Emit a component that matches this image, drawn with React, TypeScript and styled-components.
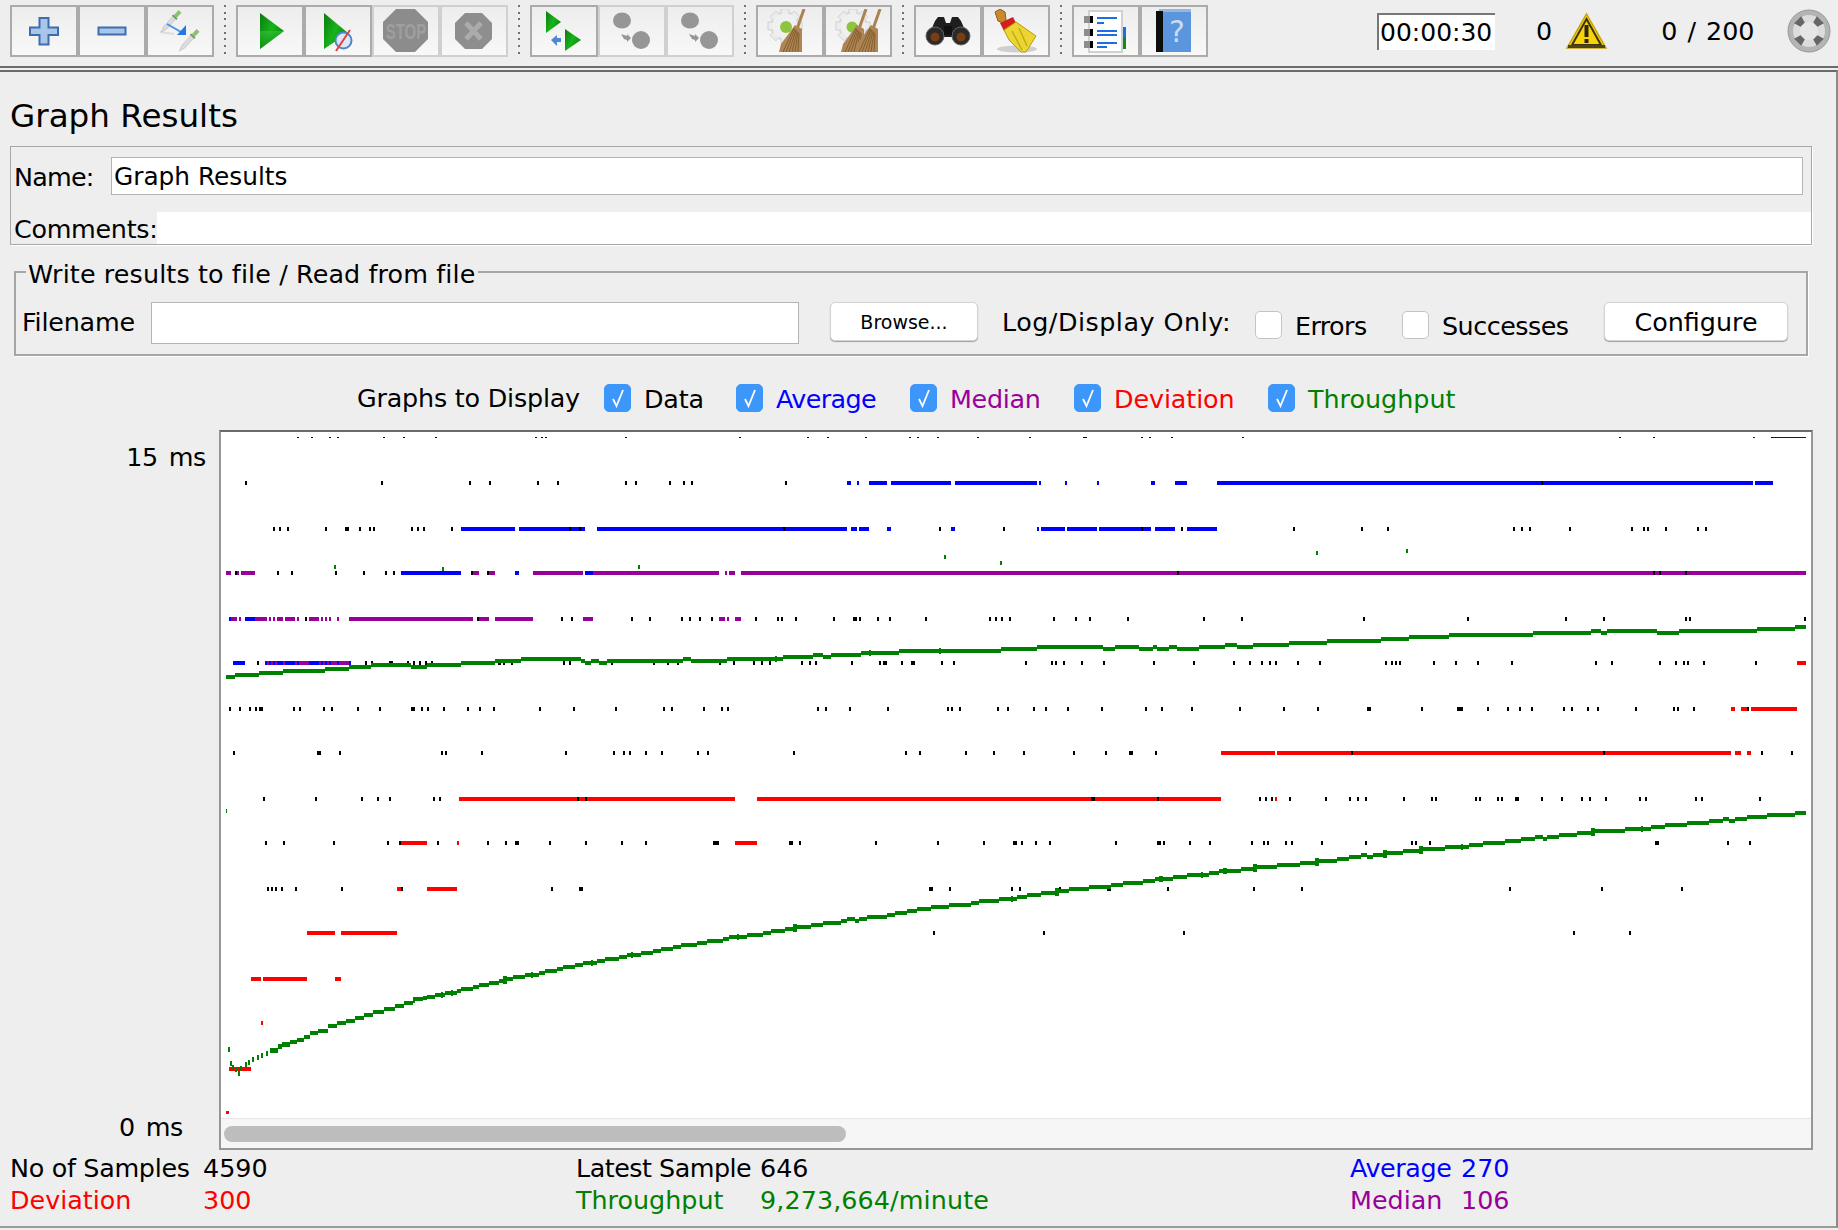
import styled, { createGlobalStyle } from "styled-components";

const GlobalStyle = createGlobalStyle`
  html, body {
    margin: 0;
    padding: 0;
    background: #eeeeee;
  }
  * {
    box-sizing: border-box;
  }
`;

const Page = styled.div`
  width: 1838px;
  height: 1230px;
  overflow: hidden;
  background: #eeeeee;
  color: #000;
  font-family: "DejaVu Sans", "Liberation Sans", sans-serif;
  font-size: 25.4px;
`;

const Toolbar = styled.div`
  display: flex;
  align-items: center;
  height: 68px;
  padding: 0 0 4px 10px;
  border-bottom: 2px solid #6b6b6b;
  margin-bottom: 2px;
`;

const ToolGroup = styled.div`
  display: flex;
`;

const ToolButton = styled.div<{ $off?: boolean }>`
  width: 68px;
  height: 52px;
  display: flex;
  align-items: center;
  justify-content: center;
  border: 2px solid ${(p) => (p.$off ? "#d0d0d0" : "#ababab")};
  background: linear-gradient(#ededed, #f8f8f8);
`;

const Dots = styled.div`
  width: 2px;
  height: 52px;
  margin: 0 10px;
  background: repeating-linear-gradient(#707070 0 2px, transparent 2px 6.7px);
`;

const Timer = styled.div`
  width: 118px;
  height: 37px;
  margin-left: 169px;
  border-top: 2px solid #777;
  border-left: 2px solid #777;
  background: #fff;
  padding-left: 1px;
  line-height: 35px;
  font-size: 25px;
  white-space: nowrap;
`;

const ToolText = styled.div<{ $left: number }>`
  margin-left: ${(p) => p.$left}px;
  font-size: 25.4px;
  word-spacing: 2px;
  white-space: nowrap;
`;

const IconSlot = styled.div<{ $left: number }>`
  margin-left: ${(p) => p.$left}px;
  display: flex;
`;

const Content = styled.div`
  height: 1158px;
  padding-left: 10px;
  border-top: 2px solid #6b6b6b;
  border-right: 2px solid #8a8a8a;
  border-bottom: 2px solid #9a9a9a;
`;

const Title = styled.h1`
  margin: 0;
  height: 74px;
  padding-top: 24px;
  font-size: 32.6px;
  line-height: 40px;
  font-weight: 400;
`;

const NamePanel = styled.div`
  width: 1802px;
  height: 99px;
  border: 1px solid #a8a8a8;
  box-shadow: 1px 1px 0 #fff;
  padding-top: 10px;
`;

const NameRow = styled.div`
  display: flex;
  align-items: center;
  height: 38px;
  padding-left: 3px;
`;

const CommentRow = styled.div`
  display: flex;
  align-items: center;
  height: 32px;
  margin-top: 17px;
  padding-left: 3px;
`;

const FieldLabel = styled.label<{ $width: number; $spacing: number }>`
  width: ${(p) => p.$width}px;
  flex: none;
  padding-top: 2px;
  letter-spacing: ${(p) => p.$spacing}px;
  white-space: nowrap;
`;

const TextBox = styled.div<{ $width: number; $height: number }>`
  width: ${(p) => p.$width}px;
  height: ${(p) => p.$height}px;
  flex: none;
  background: #fff;
  border: 1px solid #b4b4b4;
  padding-left: 2px;
  line-height: 38px;
  font-size: 24.8px;
  white-space: nowrap;
`;

const CommentBox = styled.div`
  flex: 1;
  height: 32px;
  background: #fff;
`;

const FileGroup = styled.fieldset`
  width: 1794px;
  height: 99px;
  margin: 12px 0 0 4px;
  padding: 15px 0 0 6px;
  border: 2px solid #a6a6a6;
  box-shadow: 1px 1px 0 #fff;
  min-width: 0;
`;

const FileLegend = styled.legend`
  position: relative;
  top: 2px;
  margin-left: 4px;
  padding: 0 3px 0 2px;
  line-height: 30px;
  font-size: 25.4px;
  letter-spacing: 0.12px;
  white-space: nowrap;
`;

const FileRow = styled.div`
  display: flex;
  align-items: flex-start;
`;

const PushButton = styled.div<{ $left: number; $width: number; $small?: boolean }>`
  margin-left: ${(p) => p.$left}px;
  width: ${(p) => p.$width}px;
  height: 39px;
  flex: none;
  display: flex;
  align-items: center;
  justify-content: center;
  background: #fff;
  border: 1px solid #d2d2d2;
  border-radius: 5px;
  box-shadow: 0 1px 1px #a0a0a0;
  font-size: ${(p) => (p.$small ? "19px" : "25.4px")};
`;

const FileLabel = styled.div<{ $left?: number; $width: number; $spacing?: number }>`
  margin-left: ${(p) => p.$left ?? 0}px;
  width: ${(p) => p.$width}px;
  flex: none;
  line-height: 40px;
  letter-spacing: ${(p) => p.$spacing ?? 0}px;
  white-space: nowrap;
`;

const CheckItem = styled.div<{ $width?: number; $top?: number }>`
  display: flex;
  align-items: center;
  gap: 13px;
  flex: none;
  width: ${(p) => (p.$width ? `${p.$width}px` : "auto")};
  margin-top: ${(p) => p.$top ?? 0}px;
`;

const CheckBox = styled.div<{ $on?: boolean }>`
  width: 27px;
  height: 28px;
  flex: none;
  display: flex;
  align-items: center;
  justify-content: center;
  border-radius: 5px;
  background: ${(p) => (p.$on ? "#3d97fb" : "#fff")};
  border: 1px solid ${(p) => (p.$on ? "#3d97fb" : "#c4c4c4")};
`;

const CheckText = styled.span<{ $color?: string; $spacing?: number }>`
  color: ${(p) => p.$color ?? "#000"};
  letter-spacing: ${(p) => p.$spacing ?? 0}px;
  white-space: nowrap;
  position: relative;
  top: 1px;
`;

const LegendRow = styled.div`
  display: flex;
  align-items: center;
  height: 28px;
  margin-top: 28px;
  padding-left: 347px;
`;

const LegendTitle = styled.div`
  width: 247px;
  flex: none;
  letter-spacing: -0.2px;
  white-space: nowrap;
`;

const GraphRow = styled.div`
  display: flex;
  margin-top: 18px;
  height: 720px;
`;

const Axis = styled.div`
  width: 209px;
  flex: none;
  display: flex;
  flex-direction: column;
  justify-content: space-between;
  padding: 12px 0 8px;
`;

const AxisLabel = styled.div<{ $right: number }>`
  text-align: right;
  padding-right: ${(p) => p.$right}px;
  line-height: 30px;
  word-spacing: 3px;
  letter-spacing: -0.3px;
`;

const Plot = styled.div`
  width: 1594px;
  flex: none;
  display: flex;
  flex-direction: column;
  background: #fff;
  border: 2px solid #969696;
  border-top-color: #6b6b6b;
`;

const PlotArea = styled.svg`
  display: block;
  flex: none;
`;

const ScrollTrack = styled.div`
  flex: 1;
  background: #f6f6f6;
  border-top: 1px solid #e6e6e6;
  padding: 7px 0 0 3px;
`;

const ScrollThumb = styled.div`
  width: 622px;
  height: 16px;
  border-radius: 8px;
  background: #bdbdbd;
`;

const Stats = styled.div`
  display: grid;
  grid-template-columns: 193px 373px 184px 590px 111px auto;
  grid-auto-rows: 31px;
  row-gap: 1px;
  margin-top: 3px;
`;

const Stat = styled.div<{ $color?: string; $spacing?: number }>`
  color: ${(p) => p.$color ?? "#000"};
  letter-spacing: ${(p) => p.$spacing ?? 0}px;
  line-height: 31px;
  white-space: nowrap;
`;

const BLUE = "#0000ff";
const PURPLE = "#990099";
const RED = "#ff0000";
const GREEN = "#008000";
const BLACK = "#000000";

// marks were read from the plot: a number is a tick, a pair is a run
type Mark = number | [number, number];
type RowMarks = { black?: Mark[]; blue?: Mark[]; purple?: Mark[]; red?: Mark[] };
interface Section {
  x0: number;
  scale: number;
  rows: Record<number, RowMarks>;
  upper: [number, number, number][];
  lower: [number, number, number][];
}

const rowY = [438, 483, 529, 573, 619, 663, 709, 753, 799, 843, 889, 933, 979, 1023, 1069, 1113];

const sections: Section[] = [
  {
    x0: 200,
    scale: 2.8,
    rows: {
      0: { black: [274, 313, 363, 386, 515, 571, 660, 940, 958, 969, 1192, 1511] },
      1: { black: [129, 509, 756, 812, 946, 1002, 1192, 1221, 1316, 1355, 1377] },
      2: {
        blue: [[731, 882], [893, 1078], [1112, 1568]],
        black: [207, 224, 246, 353, [406, 417], 448, 476, 487, 593, 610, 627, 705, 1036, 1064],
      },
      3: {
        blue: [[563, 731], [882, 893], [1078, 1100]],
        purple: [[73, 87], [104, 110], [115, 154], [764, 781], [809, 826], [932, 1072], [1100, 1453], [1470, 1476], [1481, 1498], [1515, 1568]],
        black: [101, 218, 257, 381, 459, 521, 543, 761, 806],
      },
      4: {
        blue: [[81, 87], [126, 154]],
        purple: [[87, 104], [109, 115], [154, 188], [193, 199], [204, 210], [216, 232], [238, 266], [272, 277], [305, 333], [339, 344], [350, 355], [361, 367], [384, 389], [417, 764], [781, 809], [826, 932], [1072, 1100], [1453, 1470], [1476, 1481], [1498, 1515]],
        black: [297, 778, 1013, 1041, 1209, 1260, 1349, 1372, 1400, 1433, 1557],
      },
      5: {
        blue: [[92, 126], [182, 423]],
        purple: [[188, 193], [199, 204], [210, 216], [232, 238], [266, 272], [277, 305], [333, 339], [344, 350], [355, 361], [367, 384], [389, 417]],
        black: [162, 465, 481, [529, 540], 582, 599, 616, 633, 649, [833, 842], 850, 873, 1019, 1036, 1153, 1271, 1310, 1338, 1456, 1495, 1551],
      },
      6: { black: [84, 112, 140, 157, [165, 176], 263, 280, 347, 369, 443, 504, [591, 602], 621, 638, 683, 750, 784, 823, 952, 1047, 1165, 1299, 1321, 1411, 1461, 1478] },
      7: { black: [95, [328, 339], 392, 677, 689, 789, 1025, 1159, 1187, 1204, 1249, 1293, 1395, 1422] },
      8: {
        red: [[725, 1498], [1560, 1568]],
        black: [179, 325, 453, 498, 532, 655, 672, 1058, 1081],
      },
      9: {
        red: [[563, 636], [720, 725], [1498, 1560]],
        black: [185, 235, 375, 526, 560, 666, 806, 857, [882, 893], 980, 1081, 1181, 1249, [1436, 1453]],
      },
      10: {
        red: [[552, 563], [636, 720]],
        black: [190, 201, 213, 229, 269, 397, 566, 985, [1061, 1072]],
      },
      11: { red: [[300, 378], [395, 552]] },
      12: { red: [[143, 171], [176, 300], [378, 395]] },
    },
    upper: [
      [73, 98, 770], [98, 165, 764], [165, 232, 758], [232, 350, 752], [350, 417, 746], [417, 479, 740],
      [479, 591, 734], [591, 636, 740], [636, 731, 734], [731, 826, 728], [826, 899, 722], [899, 1067, 716],
      [1067, 1078, 722], [1078, 1095, 728], [1095, 1117, 722], [1117, 1140, 728], [1140, 1352, 722],
      [1352, 1375, 716], [1375, 1476, 722], [1476, 1568, 716],
    ],
    lower: [
      [597, 624, 898], [624, 636, 894], [636, 658, 890], [658, 675, 884], [680, 686, 884], [686, 703, 878],
      [709, 720, 878], [720, 731, 872], [731, 764, 866], [764, 781, 860], [781, 809, 854], [809, 837, 848],
      [837, 848, 842], [860, 876, 836], [876, 910, 830], [910, 927, 824], [932, 949, 824], [949, 966, 818],
      [966, 1000, 812], [1000, 1016, 806], [1016, 1050, 800], [1050, 1072, 794], [1072, 1095, 788],
      [1100, 1112, 788], [1112, 1134, 782], [1134, 1173, 776], [1173, 1196, 770], [1196, 1207, 764],
      [1212, 1235, 764], [1235, 1268, 758], [1268, 1291, 752], [1291, 1324, 746], [1324, 1347, 740],
      [1347, 1392, 734], [1392, 1420, 728], [1420, 1464, 722], [1464, 1481, 716], [1481, 1504, 710],
      [1509, 1532, 710], [1532, 1568, 704],
    ],
  },
  {
    x0: 760,
    scale: 2.904,
    rows: {
      0: { black: [139, 197, 308, 435, 459, 517, 632, 784, [938, 950], 1108, 1132, 1195, 1404] },
      1: {
        blue: [[253, 264], [282, 287], [317, 369], [380, 555], [566, 804], [810, 816], [886, 891], [979, 984], [1135, 1147], [1205, 1240], [1327, 1568]],
        black: [75],
      },
      2: {
        blue: [[0, 253], [264, 282], [287, 317], [369, 380], [555, 566], [804, 810], [816, 886], [891, 979], [984, 1135], [1147, 1205], [1240, 1327]],
        black: [70, 523, 708, 1108, 1225, 1551],
      },
      3: { purple: [[0, 1568]], black: [1214] },
      4: { black: [52, 64, 104, 215, [270, 282], 290, 343, 377, 482, 668, 685, 703, 726, 854, 917, 958, 1068, 1289, 1399] },
      5: { black: [6, 29, 122, 145, 163, 267, 349, [357, 369], 412, [438, 450], 528, 563, 772, 848, 859, 883, 935, 999, 1144, 1260, 1376, 1423, 1458, 1481, 1498, 1562] },
      6: { black: [168, 192, 261, 372, 546, 557, 581, 691, 720, 796, 830, 894, 993, 1121, 1167, 1254, 1394, 1522] },
      7: {
        red: [[1339, 1495], [1501, 1568]],
        black: [99, 424, 465, 598, 680, 766, 912, 1005, [1071, 1083], 1150],
      },
      8: {
        red: [[0, 1339], [1495, 1501]],
        black: [[961, 973], 1156, 1452, 1469, 1487, 1539],
      },
      9: { black: [[84, 96], 116, 337, 517, 650, [735, 746], 761, 802, 842, 1034, [1153, 1165], 1173, 1248, 1307, 1429, 1463, 1475, 1527, 1545] },
      10: { black: [[491, 502], 552, 732, 755, 871, [1008, 1019], 1185, 1434] },
      11: { black: [505, 825, 1231] },
    },
    upper: [
      [0, 44, 716], [49, 67, 716], [67, 154, 710], [154, 183, 704], [183, 206, 710], [206, 293, 704],
      [293, 317, 698], [322, 404, 698], [404, 520, 692], [526, 700, 692], [700, 804, 686], [804, 996, 680],
      [996, 1031, 686], [1031, 1101, 680], [1101, 1141, 686], [1141, 1153, 680], [1153, 1188, 686],
      [1188, 1211, 680], [1211, 1275, 686], [1275, 1350, 680], [1350, 1385, 674], [1385, 1432, 680],
      [1432, 1536, 674], [1536, 1568, 668],
    ],
    lower: [
      [0, 9, 704], [9, 32, 698], [32, 73, 692], [73, 96, 686], [108, 148, 680], [148, 183, 674], [183, 218, 668],
      [218, 235, 668], [235, 253, 662], [253, 276, 656], [276, 287, 662], [287, 311, 656], [311, 369, 650],
      [369, 392, 644], [392, 427, 638], [427, 456, 632], [456, 497, 626], [497, 549, 620], [549, 613, 614],
      [613, 636, 608], [636, 694, 602], [694, 729, 596], [735, 746, 596], [746, 775, 590], [775, 816, 584],
      [816, 856, 578], [868, 897, 572], [897, 955, 566], [955, 996, 560], [996, 1019, 560], [1019, 1054, 554],
      [1054, 1112, 548], [1112, 1147, 542], [1147, 1159, 536], [1170, 1199, 536], [1199, 1240, 530],
      [1240, 1281, 524], [1287, 1304, 524], [1304, 1333, 518], [1333, 1345, 512], [1356, 1397, 512],
      [1397, 1432, 506], [1443, 1501, 500], [1501, 1568, 494],
    ],
  },
  {
    x0: 1300,
    scale: 3,
    rows: {
      0: { black: [960, 1062, [1413, 1419]], blue: [[1359, 1365], [1419, 1518]] },
      1: { blue: [[0, 1359], [1365, 1419]], black: [726] },
      2: { black: [186, 264, 642, 666, 690, 810, 996, 1032, 1044, 1098, 1194, 1218] },
      3: { purple: [[0, 1518]], black: [1062, 1080, 1158] },
      4: { black: [192, 504, 798, 912, 1158, 1170, 1516] },
      5: { red: [[1491, 1518]], black: [60, 258, 276, 288, 300, 402, 468, 534, 636, 888, 936, 1080, 1128, 1152, 1164, 1212, 1368] },
      6: {
        red: [[1293, 1305], [1323, 1341], [1353, 1491]],
        black: [54, [201, 213], 366, [471, 489], 564, 624, 660, 696, 792, 816, 864, 894, 1008, 1122, 1134, 1182, 1344],
      },
      7: { red: [[0, 1293], [1305, 1323], [1341, 1353]], black: [156, 912, 1386, 1476] },
      8: { black: [78, 150, 174, 198, 312, 396, 408, 528, 540, 594, 606, [645, 657], 726, 786, 846, 870, 918, 1020, 1038, 1188, 1206, 1380] },
      9: { black: [66, 198, 336, 348, 390, [1065, 1077], 1284, 1350] },
      10: { black: [6, 630, 906, 1146] },
      11: { black: [822, 990] },
    },
    upper: [
      [0, 81, 668], [81, 243, 662], [243, 327, 656], [327, 447, 650], [447, 699, 644], [699, 873, 638],
      [873, 903, 632], [903, 921, 638], [921, 1071, 632], [1071, 1137, 638], [1137, 1371, 632],
      [1371, 1485, 626], [1485, 1518, 620],
    ],
    lower: [
      [0, 45, 488], [57, 111, 482], [111, 147, 476], [147, 183, 470], [183, 201, 464], [201, 219, 470],
      [219, 249, 464], [261, 309, 458], [309, 357, 452], [369, 435, 446], [435, 483, 440], [489, 507, 440],
      [507, 549, 434], [549, 615, 428], [615, 663, 422], [663, 705, 416], [705, 729, 410], [729, 741, 416],
      [741, 777, 410], [777, 831, 404], [831, 873, 398], [885, 975, 392], [975, 1023, 386], [1029, 1053, 386],
      [1053, 1095, 380], [1095, 1161, 374], [1161, 1227, 368], [1227, 1269, 362], [1269, 1287, 356],
      [1287, 1305, 362], [1305, 1341, 356], [1341, 1401, 350], [1401, 1485, 344], [1485, 1518, 338],
    ],
  },
];

// first samples of the lower throughput curve, before it settles into a line
const earlyCurve = [
  [510, 266], [515, 310], [520, 322], [527, 326], [533, 338], [538, 325], [548, 312], [555, 305], [565, 298],
  [575, 292], [585, 286], [595, 278], [605, 270], [622, 258], [632, 252], [650, 245], [665, 240], [680, 230],
  [695, 220], [712, 212], [735, 197], [755, 190], [775, 184], [795, 175], [815, 165], [835, 155], [860, 146],
  [885, 138], [905, 130], [925, 124],
];

const strayGreen = [
  [334, 567], [442, 569], [638, 567], [944, 557], [1000, 563], [1316, 553], [1406, 551],
];

const Bars = ({ section, row, marks, color }: { section: Section; row: number; marks?: Mark[]; color: string }) => (
  <>
    {(marks ?? []).map((m, i) => {
      const a = typeof m === "number" ? section.x0 + m / section.scale - 1 : section.x0 + m[0] / section.scale;
      const w = typeof m === "number" ? 2 : (m[1] - m[0]) / section.scale;
      const y = row === 0 ? rowY[row] - 1 : rowY[row] - 2;
      return <rect key={i} x={a} y={y} width={w} height={row === 0 ? 1 : 4} fill={color} />;
    })}
  </>
);

const StepLine = ({ section, steps, y0 }: { section: Section; steps: [number, number, number][]; y0: number }) => (
  <>
    {steps.map(([a, b, v], i) => {
      const next = steps[i + 1];
      const x = section.x0 + a / section.scale;
      const y = y0 + v / 3 - 2;
      return (
        <g key={i}>
          <rect x={x} y={y} width={(b - a) / section.scale} height={4} fill={GREEN} />
          {next && next[0] > b && (
            <rect
              x={section.x0 + b / section.scale}
              y={y0 + Math.min(v, next[2]) / 3 - 3}
              width={(next[0] - b) / section.scale}
              height={Math.abs(v - next[2]) / 3 + 6}
              fill={GREEN}
            />
          )}
        </g>
      );
    })}
  </>
);

const Chart = () => (
  <PlotArea width={1590} height={686} viewBox="221 432 1590 686" shapeRendering="crispEdges">
    {sections.map((s) =>
      Object.entries(s.rows).map(([row, marks]) => (
        <g key={`${s.x0}-${row}`}>
          <Bars section={s} row={+row} marks={marks.blue} color={BLUE} />
          <Bars section={s} row={+row} marks={marks.purple} color={PURPLE} />
          <Bars section={s} row={+row} marks={marks.red} color={RED} />
          <Bars section={s} row={+row} marks={marks.black} color={BLACK} />
        </g>
      ))
    )}
    <rect x={261} y={1021} width={2} height={4} fill={RED} />
    <rect x={229} y={1067} width={22} height={4} fill={RED} />
    <rect x={226} y={1111} width={3} height={3} fill={RED} />
    {strayGreen.map(([x, y]) => (
      <rect key={x} x={x} y={y - 2} width={2} height={4} fill={GREEN} />
    ))}
    {sections.map((s) => (
      <g key={s.x0}>
        <StepLine section={s} steps={s.upper} y0={420} />
        <StepLine section={s} steps={s.lower} y0={700} />
      </g>
    ))}
    {earlyCurve.map(([z, v], i) => {
      const next = earlyCurve[i + 1];
      const x = z / 2.24;
      const gap = next ? (next[0] - z) / 2.24 : 2;
      return (
        <rect
          key={z}
          x={x}
          y={960 + v / 3 - 2}
          width={z < 600 ? 2 : gap}
          height={z < 640 ? 5 : 4}
          fill={GREEN}
        />
      );
    })}
    <rect x={226} y={809} width={1} height={4} fill={GREEN} />
  </PlotArea>
);

const PlayDefs = () => (
  <defs>
    <linearGradient id="play" x1="0" y1="0" x2="1" y2="0.6">
      <stop offset="0" stopColor="#0c7a10" />
      <stop offset="0.55" stopColor="#16b41a" />
      <stop offset="1" stopColor="#0a8a0e" />
    </linearGradient>
    <linearGradient id="playLow" x1="0" y1="0" x2="0" y2="1">
      <stop offset="0" stopColor="#38c43a" />
      <stop offset="1" stopColor="#067a0a" />
    </linearGradient>
  </defs>
);

const IconFrame = styled.svg`
  display: block;
  flex: none;
`;

const Icon = ({ children, w = 48, h = 44 }: { children: React.ReactNode; w?: number; h?: number }) => (
  <IconFrame width={w} height={h} viewBox={`0 0 ${w} ${h}`}>
    {children}
  </IconFrame>
);

const PlusIcon = () => (
  <Icon>
    <path d="M19.500 9h9v9.500H38v7.500h-9.500V35.500h-9V26H10v-7.500h9.500z" fill="#a9c5ea" stroke="#3c6eae" strokeWidth="2" />
  </Icon>
);

const MinusIcon = () => (
  <Icon>
    <rect x="10.500" y="18.500" width="27" height="7" fill="#a9c5ea" stroke="#3c6eae" strokeWidth="2" />
  </Icon>
);

const Dropper = ({ x, y }: { x: number; y: number }) => (
  <g transform={`translate(${x} ${y}) rotate(42)`}>
    <rect x="-2" y="-9" width="4" height="7" fill="#8fbf72" />
    <rect x="-3" y="-2" width="6" height="2" fill="#6f9a58" />
    <path d="M-2 0h4v13l-2 6-2-6z" fill="#dcdcdc" stroke="#bdbdbd" strokeWidth="0.6" />
  </g>
);

const DropperIcon = () => (
  <Icon>
    <path d="M4 23l14 2" stroke="#dddddd" strokeWidth="2" />
    <Dropper x={18} y={9} />
    <Dropper x={36} y={28} />
    <path d="M11 15l14 8" stroke="#4a90e8" strokeWidth="2" />
    <path d="M30 16v10h-9z" fill="#1f78ef" />
  </Icon>
);

const PlayIcon = () => (
  <Icon>
    <PlayDefs />
    <path d="M14 4l24 18-24 18z" fill="url(#play)" />
    <path d="M14 22h24L14 40z" fill="url(#playLow)" opacity="0.6" />
  </Icon>
);

const PlayNoTimerIcon = () => (
  <Icon>
    <PlayDefs />
    <path d="M10 4l24 20-24 16z" fill="url(#play)" />
    <circle cx="29.500" cy="31.500" r="8" fill="#dbe7f5" stroke="#4d86c9" strokeWidth="2" />
    <path d="M22 42l14-21" stroke="#e0403c" strokeWidth="2" />
  </Icon>
);

const StopIcon = () => (
  <Icon>
    <path d="M14 0h19l13 13v17L33 43H14L1 30V13z" fill="#8c8c8c" />
    <text
      x="24"
      y="20"
      transform="scale(1 1.5)"
      textAnchor="middle"
      fontSize="15"
      fontWeight="700"
      fill="#9f9f9f"
      fontFamily="Liberation Sans, sans-serif"
    >
      STOP
    </text>
  </Icon>
);

const ShutdownIcon = () => (
  <Icon>
    <path d="M15 4h17l10 10v16L32 40H15L5 30V14z" fill="#8e8e8e" />
    <path d="M16 14l15 16M31 14L16 30" stroke="#ababab" strokeWidth="5" />
  </Icon>
);

const RemoteStartIcon = () => (
  <Icon>
    <PlayDefs />
    <path d="M6 2l15 11L6 24z" fill="url(#play)" />
    <path d="M25 20l16 11-16 11z" fill="url(#play)" />
    <path d="M11 31l6-5v3h4v4h-4v4z" fill="#4f86d8" />
  </Icon>
);

const RemoteGreyIcon = () => (
  <Icon>
    <ellipse cx="14" cy="11.500" rx="9" ry="8" fill="#969696" />
    <ellipse cx="33" cy="31" rx="9" ry="9" fill="#969696" />
    <path d="M13 25l6 2v-2l4 4-4 4v-2l-3-1z" fill="#969696" />
  </Icon>
);

const Gear = ({ x = 0 }: { x?: number }) => (
  <g transform={`translate(${x} 0)`}>
    <circle cx="19" cy="17" r="14" fill="#ececec" stroke="#cccccc" />
    {[0, 45, 90, 135, 180, 225, 270, 315].map((a) => (
      <rect key={a} x="15" y="0" width="8" height="6" fill="#ececec" stroke="#cccccc" strokeWidth="0.8" transform={`rotate(${a} 19 17)`} />
    ))}
    <circle cx="19" cy="17" r="12.500" fill="#f0f0f0" />
  </g>
);

const Broom = ({ x = 0 }: { x?: number }) => (
  <g transform={`translate(${x} 0)`}>
    <path d="M38 0l-7 20" stroke="#a98350" strokeWidth="3" />
    <path d="M29 16l7 4 0 23H13l2-8z" fill="#ae8554" />
    {[17, 20, 23, 26, 29, 32].map((b, i) => (
      <path key={b} d={`M${28 + i} ${19 + i}L${b} 43`} stroke="#84602f" strokeWidth="1" />
    ))}
  </g>
);

const ClearIcon = () => (
  <Icon>
    <Gear />
    <circle cx="20" cy="18" r="6" fill="#8cc63f" />
    <Broom />
  </Icon>
);

const ClearAllIcon = () => (
  <Icon>
    <Gear />
    <circle cx="18" cy="18" r="5.500" fill="#8cc63f" />
    <Broom x={-6} />
    <Broom x={8} />
  </Icon>
);

const BinocularsIcon = () => (
  <Icon>
    <path d="M11 12l3-4h6l2 6h4l2-6h6l3 4 7 16H4z" fill="#1e1e1e" />
    <circle cx="11" cy="27" r="9" fill="#2a2a2a" stroke="#666" />
    <circle cx="37" cy="27" r="9" fill="#2a2a2a" stroke="#666" />
    <circle cx="11" cy="28" r="4.500" fill="#7a3c12" />
    <circle cx="37" cy="28" r="4.500" fill="#7a3c12" />
    <rect x="20" y="17" width="8" height="9" fill="#111" />
  </Icon>
);

const BroomIcon = () => (
  <Icon>
    <ellipse cx="25" cy="40" rx="20" ry="3.500" fill="#cfcfcf" />
    <path d="M3 3l5-3 5 3 1 8-3 3-5-2z" fill="#c98a2b" stroke="#8e5d17" />
    <path d="M8 14l13-6 3 6-12 8z" fill="#d2201a" />
    <path d="M12 21l12-8 20 14-10 16-5 0-12-12z" fill="#ecd530" stroke="#b59a12" />
    <path d="M20 22l10 19M27 19l8 18" stroke="#b9a414" strokeWidth="1.200" />
  </Icon>
);

const NotebookIcon = () => (
  <Icon>
    <rect x="38" y="18" width="6" height="10" fill="#1c6fe0" />
    <rect x="38" y="28" width="6" height="12" fill="#0e8c1a" />
    <rect x="7" y="2" width="33" height="41" fill="#fff" stroke="#d0d0d0" strokeWidth="2" />
    {[7, 20, 32].map((y) => (
      <g key={y}>
        <rect x="2" y={y} width="9" height="7" fill="#8d8d8d" />
        <rect x="8" y={y} width="3" height="7" fill="#000" />
      </g>
    ))}
    {[
      [15, 8, 20], [15, 13, 7], [15, 21, 20], [15, 25, 20], [15, 33, 20], [15, 37, 10],
    ].map(([x, y, w]) => (
      <rect key={y} x={x} y={y} width={w} height="2" fill="#1c6fe0" />
    ))}
  </Icon>
);

const HelpIcon = () => (
  <Icon>
    <rect x="9" y="0" width="32" height="43" fill="#5b95dd" />
    <rect x="9" y="0" width="32" height="3" fill="#98b6d8" />
    <rect x="6" y="2" width="7" height="41" fill="#0d0d0d" />
    <text x="27" y="33" textAnchor="middle" fontSize="30" fill="#c6dcf5" fontFamily="DejaVu Sans, sans-serif">
      ?
    </text>
  </Icon>
);

const WarningIcon = () => (
  <Icon w={43} h={38}>
    <path d="M21.500 2L41 36H2z" fill="#f8d20a" stroke="#c6a20c" strokeWidth="1.500" />
    <path d="M21.500 7L36 33H7z" fill="none" stroke="#3c3410" strokeWidth="2" />
    <rect x="3" y="33" width="37" height="3" fill="#4f4410" />
    <rect x="19.500" y="13" width="4" height="12" fill="#2a2408" />
    <rect x="19.500" y="27" width="4" height="4" fill="#2a2408" />
  </Icon>
);

const RunningIcon = () => (
  <Icon w={44} h={44}>
    <circle cx="22" cy="22" r="21" fill="#b4b4b4" stroke="#999" />
    <circle cx="22" cy="22" r="16" fill="#dcdcdc" />
    <circle cx="22" cy="22" r="9" fill="#e6e6e6" />
    {[45, 135, 225, 315].map((a) => (
      <path key={a} d="M17 6h10l-2 7h-6z" fill="#666" transform={`rotate(${a} 22 22)`} />
    ))}
  </Icon>
);

const Check = () => (
  <svg width="14" height="20" viewBox="0 0 14 20">
    <path d="M2 11l3.500 7L12 2" fill="none" stroke="#fff" strokeWidth="1.800" />
  </svg>
);

const legendItems = [
  { label: "Data", width: 132, spacing: -0.2 },
  { label: "Average", color: BLUE, width: 174, spacing: -0.6 },
  { label: "Median", color: PURPLE, width: 164, spacing: -0.3 },
  { label: "Deviation", color: RED, width: 194, spacing: -0.1 },
  { label: "Throughput", color: GREEN, spacing: 0 },
];

const App = () => {
  return (
    <Page>
      <GlobalStyle />
      <Toolbar>
        <ToolGroup>
          <ToolButton><PlusIcon /></ToolButton>
          <ToolButton><MinusIcon /></ToolButton>
          <ToolButton><DropperIcon /></ToolButton>
        </ToolGroup>
        <Dots />
        <ToolGroup>
          <ToolButton><PlayIcon /></ToolButton>
          <ToolButton><PlayNoTimerIcon /></ToolButton>
          <ToolButton $off><StopIcon /></ToolButton>
          <ToolButton $off><ShutdownIcon /></ToolButton>
        </ToolGroup>
        <Dots />
        <ToolGroup>
          <ToolButton><RemoteStartIcon /></ToolButton>
          <ToolButton $off><RemoteGreyIcon /></ToolButton>
          <ToolButton $off><RemoteGreyIcon /></ToolButton>
        </ToolGroup>
        <Dots />
        <ToolGroup>
          <ToolButton><ClearIcon /></ToolButton>
          <ToolButton><ClearAllIcon /></ToolButton>
        </ToolGroup>
        <Dots />
        <ToolGroup>
          <ToolButton><BinocularsIcon /></ToolButton>
          <ToolButton><BroomIcon /></ToolButton>
        </ToolGroup>
        <Dots />
        <ToolGroup>
          <ToolButton><NotebookIcon /></ToolButton>
          <ToolButton><HelpIcon /></ToolButton>
        </ToolGroup>
        <Timer>00:00:30</Timer>
        <ToolText $left={41}>0</ToolText>
        <IconSlot $left={13}><WarningIcon /></IconSlot>
        <ToolText $left={53}>0 / 200</ToolText>
        <IconSlot $left={33}><RunningIcon /></IconSlot>
      </Toolbar>
      <Content>
        <Title>Graph Results</Title>
        <NamePanel>
          <NameRow>
            <FieldLabel $width={97} $spacing={-0.8}>Name:</FieldLabel>
            <TextBox $width={1692} $height={38}>Graph Results</TextBox>
          </NameRow>
          <CommentRow>
            <FieldLabel $width={143} $spacing={-0.3}>Comments:</FieldLabel>
            <CommentBox />
          </CommentRow>
        </NamePanel>
        <FileGroup>
          <FileLegend>Write results to file / Read from file</FileLegend>
          <FileRow>
            <FileLabel $width={129} $spacing={-0.2}>Filename</FileLabel>
            <TextBox $width={648} $height={42} />
            <PushButton $left={31} $width={148} $small>Browse...</PushButton>
            <FileLabel $left={24} $width={253} $spacing={0.5}>Log/Display Only:</FileLabel>
            <CheckItem $width={147} $top={8}>
              <CheckBox />
              <CheckText $spacing={-0.6}>Errors</CheckText>
            </CheckItem>
            <CheckItem $width={202} $top={8}>
              <CheckBox />
              <CheckText $spacing={-0.5}>Successes</CheckText>
            </CheckItem>
            <PushButton $left={0} $width={184}>Configure</PushButton>
          </FileRow>
        </FileGroup>
        <LegendRow>
          <LegendTitle>Graphs to Display</LegendTitle>
          {legendItems.map((item) => (
            <CheckItem key={item.label} $width={item.width}>
              <CheckBox $on><Check /></CheckBox>
              <CheckText $color={item.color} $spacing={item.spacing}>{item.label}</CheckText>
            </CheckItem>
          ))}
        </LegendRow>
        <GraphRow>
          <Axis>
            <AxisLabel $right={13}>15 ms</AxisLabel>
            <AxisLabel $right={36}>0 ms</AxisLabel>
          </Axis>
          <Plot>
            <Chart />
            <ScrollTrack>
              <ScrollThumb />
            </ScrollTrack>
          </Plot>
        </GraphRow>
        <Stats>
          <Stat $spacing={-0.3}>No of Samples</Stat>
          <Stat>4590</Stat>
          <Stat $spacing={-0.5}>Latest Sample</Stat>
          <Stat>646</Stat>
          <Stat $color={BLUE} $spacing={-0.4}>Average</Stat>
          <Stat $color={BLUE}>270</Stat>
          <Stat $color={RED}>Deviation</Stat>
          <Stat $color={RED}>300</Stat>
          <Stat $color={GREEN}>Throughput</Stat>
          <Stat $color={GREEN} $spacing={0.1}>9,273,664/minute</Stat>
          <Stat $color={PURPLE}>Median</Stat>
          <Stat $color={PURPLE}>106</Stat>
        </Stats>
      </Content>
    </Page>
  );
};

export default App;
